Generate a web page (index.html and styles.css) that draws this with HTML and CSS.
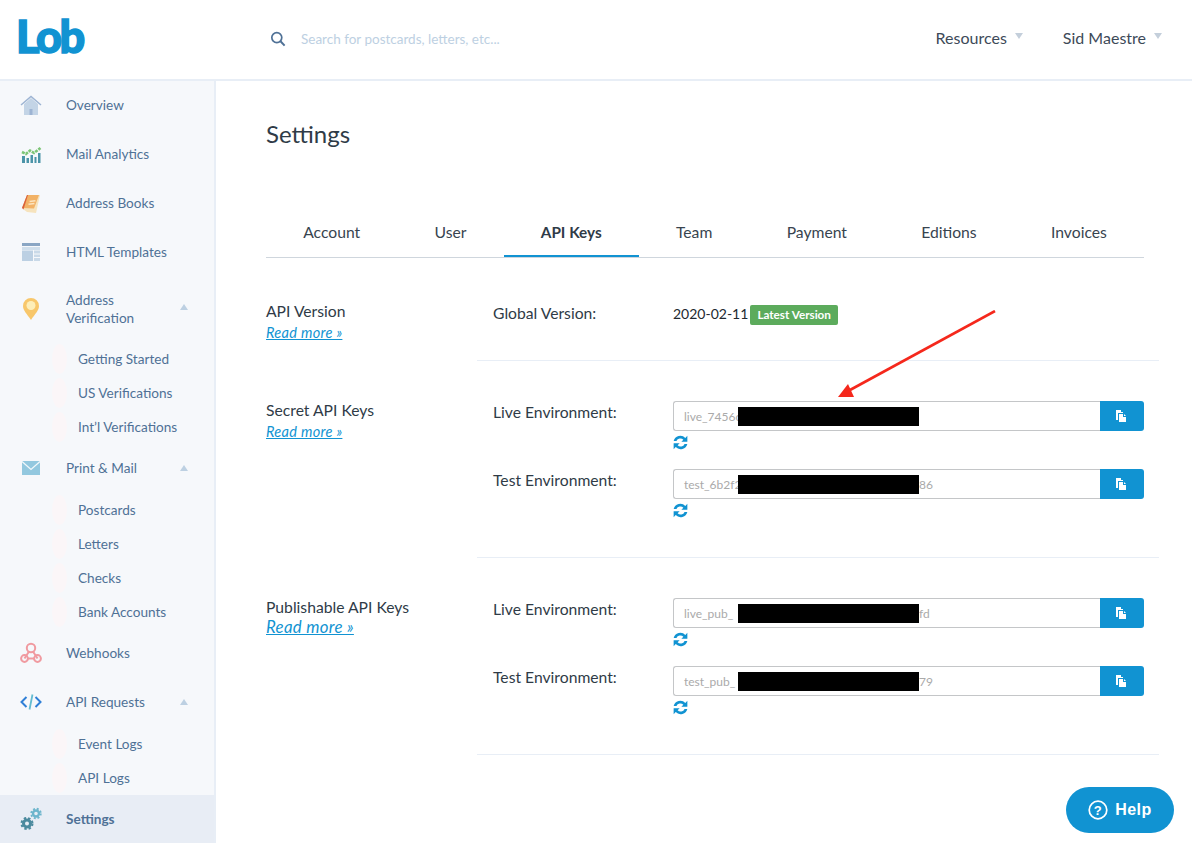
FILE: index.html
```html
<!DOCTYPE html>
<html lang="en">
  <head>
    <meta charset="UTF-8" />
    <meta name="viewport" content="width=device-width, initial-scale=1.0" />
    <title>Settings</title>
    <link rel="stylesheet" href="styles.css">
  </head>
  <body>
    <header class="topbar">
      <div class="logo">Lob</div>
      <div class="search">
        <svg class="search-icon" width="16" height="16" viewBox="0 0 16 16"><circle cx="6.8" cy="6.6" r="5" fill="none" stroke="#4f7196" stroke-width="1.7"/><path d="M10.5 10.3L14.6 14.6" stroke="#4f7196" stroke-width="2"/></svg>
        <span>Search for postcards, letters, etc...</span>
      </div>
      <div class="top-link top-resources">Resources <i class="top-caret"></i></div>
      <div class="top-link">Sid Maestre <i class="top-caret"></i></div>
    </header>

    <div class="layout">
      <nav class="sidebar">
        <a class="nav-item nav-first">
          <svg class="nav-icon" width="22" height="22" viewBox="0 0 22 22"><path d="M4 10L11 4L18 10V21H4Z" fill="#c3d4e6"/><path d="M1 11L11 2.5L21 11" fill="none" stroke="#9db4d3" stroke-width="1.5"/><rect x="9.5" y="15" width="3" height="6" fill="#9db4d3"/></svg>
          <span>Overview</span>
        </a>
        <a class="nav-item">
          <svg class="nav-icon" width="22" height="22" viewBox="0 0 22 22"><path d="M2 13V20H5V13ZM6.500 15V20H9V15ZM10.500 12V20H13V12ZM14.500 14V20H16.500V14ZM18 10V20H20.500V10Z" fill="#4b94a8"/><path d="M2 9L6 11L10 7.500L14 10L20.500 5" fill="none" stroke="#7cc576" stroke-width="2.600" stroke-dasharray="3 1"/></svg>
          <span>Mail Analytics</span>
        </a>
        <a class="nav-item">
          <svg class="nav-icon" width="22" height="22" viewBox="0 0 22 22"><path d="M3 17L7 20L16 21L20 3L8 4Z" fill="#f6e3bd"/><path d="M2 16L7 3H19L14 16.500Z" fill="#f2b266"/><path d="M2 16L7 3H8L3.500 17.500Z" fill="#d9603b"/><rect x="9.500" y="8.500" width="6" height="1.500" fill="#fbe4c0" transform="rotate(-8 12 9)"/><rect x="8.500" y="11" width="6" height="1.500" fill="#fbe4c0" transform="rotate(-8 12 12)"/></svg>
          <span>Address Books</span>
        </a>
        <a class="nav-item">
          <svg class="nav-icon" width="22" height="22" viewBox="0 0 22 22"><rect x="2" y="2" width="18" height="3" fill="#8aa6c4"/><rect x="2" y="6" width="18" height="3" fill="#d0dfec"/><rect x="2" y="9.500" width="11" height="10.500" fill="#bcd0e3"/><path d="M14 9.500H20V12.500H14ZM14 13.500H20V16H14ZM14 17H20V20H14Z" fill="#c9d9e8"/></svg>
          <span>HTML Templates</span>
        </a>
        <a class="nav-item nav-tall">
          <svg class="nav-icon" width="22" height="24" viewBox="0 0 22 24"><path d="M11 23C7 17 3 13.500 3 9A8 8 0 0 1 19 9C19 13.500 15 17 11 23Z" fill="#f8c76b"/><circle cx="11" cy="8.500" r="4.500" fill="#fdeeb9"/></svg>
          <span class="nav-text">Address Verification</span>
          <i class="nav-caret"></i>
        </a>
        <div class="sub-list sub-verify">
          <a class="sub-item">Getting Started</a>
          <a class="sub-item">US Verifications</a>
          <a class="sub-item">Int’l Verifications</a>
        </div>
        <a class="nav-item">
          <svg class="nav-icon" width="22" height="22" viewBox="0 0 22 22"><rect x="2" y="4" width="18" height="14" fill="#93c8df"/><path d="M2 4.500L11 12.500L20 4.500" fill="none" stroke="#f2f8fb" stroke-width="1.300"/></svg>
          <span>Print &amp; Mail</span>
          <i class="nav-caret"></i>
        </a>
        <div class="sub-list">
          <a class="sub-item">Postcards</a>
          <a class="sub-item">Letters</a>
          <a class="sub-item">Checks</a>
          <a class="sub-item">Bank Accounts</a>
        </div>
        <a class="nav-item">
          <svg class="nav-icon" width="22" height="22" viewBox="0 0 22 22"><g fill="none" stroke="#f09aa0" stroke-width="2"><circle cx="11" cy="6" r="4.200"/><circle cx="4.500" cy="16.500" r="3.400"/><circle cx="17.500" cy="16.500" r="3.400"/><path d="M4.500 16.500L9 9.500M13 9.500L17.500 16.500M8 16.500H14"/></g></svg>
          <span>Webhooks</span>
        </a>
        <a class="nav-item">
          <svg class="nav-icon" width="22" height="22" viewBox="0 0 22 22"><path d="M6.500 6L1.500 11L6.500 16M15.500 6L20.500 11L15.500 16" fill="none" stroke="#2f7fd6" stroke-width="2"/><path d="M12.500 3.500L9.500 18.500" stroke="#63bcd0" stroke-width="1.800"/></svg>
          <span>API Requests</span>
          <i class="nav-caret"></i>
        </a>
        <div class="sub-list">
          <a class="sub-item">Event Logs</a>
          <a class="sub-item">API Logs</a>
        </div>
        <a class="nav-item nav-active">
          <svg class="nav-icon" width="22" height="24" viewBox="0 0 22 24"><g fill="none"><circle cx="7" cy="16.500" r="3.500" stroke="#4b8a9e" stroke-width="3"/><circle cx="7" cy="16.500" r="5.500" stroke="#4b8a9e" stroke-width="2" stroke-dasharray="2.400 2"/><circle cx="16" cy="6.500" r="3" stroke="#6db5cc" stroke-width="2.400"/><circle cx="16" cy="6.500" r="4.800" stroke="#6db5cc" stroke-width="1.800" stroke-dasharray="2 1.800"/></g></svg>
          <span class="nav-active-text">Settings</span>
        </a>
      </nav>

      <main class="content">
        <h1 class="page-title">Settings</h1>
        <div class="tabs">
          <a class="tab">Account</a>
          <a class="tab">User</a>
          <a class="tab tab-active">API Keys</a>
          <a class="tab">Team</a>
          <a class="tab">Payment</a>
          <a class="tab">Editions</a>
          <a class="tab">Invoices</a>
        </div>

        <section class="section section-version">
          <div class="section-label">
            <div class="label-title">API Version</div>
            <a class="read-more">Read more »</a>
          </div>
          <div class="section-body">
            <div class="version-row">
              <div class="field-name">Global Version:</div>
              <div class="version-date">2020-02-11</div>
              <span class="badge">Latest Version</span>
            </div>
          </div>
        </section>

        <section class="section">
          <div class="section-label">
            <div class="label-title">Secret API Keys</div>
            <a class="read-more">Read more »</a>
          </div>
          <div class="section-body">
            <div class="key-row">
              <div class="field-name">Live Environment:</div>
              <div class="key-field">
                <div class="key-input-wrap">
                  <div class="key-input">live_7456c<b class="redact"></b></div>
                  <button class="copy-btn"><svg width="12" height="12" viewBox="0 0 12 12"><path d="M1 0H6V2H8V3H3V10H1ZM4 4H8V7H11V12H4ZM9 4L11 6H9Z" fill="#fff"/></svg></button>
                </div>
                <svg class="refresh" width="15" height="15" viewBox="0 0 14 14"><path d="M.6 5.700A6.500 6.500 0 0 1 11.500 2.700L13.400 .8V6.400H7.800L9.700 4.500A3.900 3.900 0 0 0 3.200 5.700ZM13.400 8.300A6.500 6.500 0 0 1 2.500 11.300L.6 13.200V7.600H6.200L4.300 9.500A3.900 3.900 0 0 0 10.800 8.300Z" fill="#1193d2"/></svg>
              </div>
            </div>
            <div class="key-row">
              <div class="field-name">Test Environment:</div>
              <div class="key-field">
                <div class="key-input-wrap">
                  <div class="key-input">test_6b2f2<b class="redact"></b><span class="key-tail">86</span></div>
                  <button class="copy-btn"><svg width="12" height="12" viewBox="0 0 12 12"><path d="M1 0H6V2H8V3H3V10H1ZM4 4H8V7H11V12H4ZM9 4L11 6H9Z" fill="#fff"/></svg></button>
                </div>
                <svg class="refresh" width="15" height="15" viewBox="0 0 14 14"><path d="M.6 5.700A6.500 6.500 0 0 1 11.500 2.700L13.400 .8V6.400H7.800L9.700 4.500A3.900 3.900 0 0 0 3.200 5.700ZM13.400 8.300A6.500 6.500 0 0 1 2.500 11.300L.6 13.200V7.600H6.200L4.300 9.500A3.900 3.900 0 0 0 10.800 8.300Z" fill="#1193d2"/></svg>
              </div>
            </div>
          </div>
        </section>

        <section class="section">
          <div class="section-label">
            <div class="label-title">Publishable API Keys</div>
            <a class="read-more read-more-big">Read more »</a>
          </div>
          <div class="section-body">
            <div class="key-row">
              <div class="field-name">Live Environment:</div>
              <div class="key-field">
                <div class="key-input-wrap">
                  <div class="key-input">live_pub_<b class="redact"></b><span class="key-tail">fd</span></div>
                  <button class="copy-btn"><svg width="12" height="12" viewBox="0 0 12 12"><path d="M1 0H6V2H8V3H3V10H1ZM4 4H8V7H11V12H4ZM9 4L11 6H9Z" fill="#fff"/></svg></button>
                </div>
                <svg class="refresh" width="15" height="15" viewBox="0 0 14 14"><path d="M.6 5.700A6.500 6.500 0 0 1 11.500 2.700L13.400 .8V6.400H7.800L9.700 4.500A3.900 3.900 0 0 0 3.200 5.700ZM13.400 8.300A6.500 6.500 0 0 1 2.500 11.300L.6 13.200V7.600H6.200L4.300 9.500A3.900 3.900 0 0 0 10.800 8.300Z" fill="#1193d2"/></svg>
              </div>
            </div>
            <div class="key-row">
              <div class="field-name">Test Environment:</div>
              <div class="key-field">
                <div class="key-input-wrap">
                  <div class="key-input">test_pub_<b class="redact"></b><span class="key-tail">79</span></div>
                  <button class="copy-btn"><svg width="12" height="12" viewBox="0 0 12 12"><path d="M1 0H6V2H8V3H3V10H1ZM4 4H8V7H11V12H4ZM9 4L11 6H9Z" fill="#fff"/></svg></button>
                </div>
                <svg class="refresh" width="15" height="15" viewBox="0 0 14 14"><path d="M.6 5.700A6.500 6.500 0 0 1 11.500 2.700L13.400 .8V6.400H7.800L9.700 4.500A3.900 3.900 0 0 0 3.200 5.700ZM13.400 8.300A6.500 6.500 0 0 1 2.500 11.300L.6 13.200V7.600H6.200L4.300 9.500A3.900 3.900 0 0 0 10.800 8.300Z" fill="#1193d2"/></svg>
              </div>
            </div>
          </div>
        </section>
      </main>
    </div>

    <!-- red arrow drawn over the screenshot -->
    <svg class="arrow" width="170" height="100" viewBox="0 0 170 100"><path d="M159 1L14 80" stroke="#f5281c" stroke-width="2.600"/><path d="M2 87L12 74L18 87Z" fill="#f5281c"/></svg>

    <button class="help">
      <svg width="20" height="20" viewBox="0 0 20 20"><circle cx="10" cy="10" r="8.800" fill="none" stroke="#fff" stroke-width="1.700"/><text x="10" y="14.500" text-anchor="middle" class="help-q">?</text></svg>
      Help
    </button>
  </body>
</html>
```

FILE: styles.css
```css
* {
  box-sizing: border-box;
}
html,
body {
  height: 100%;
}
body {
  margin: 0;
  overflow: hidden;
  background-color: #fff;
  color: #2f3b47;
  font-family: "Lato", "Liberation Sans", sans-serif;
  font-size: 15.700px;
}

/* top bar */
.topbar {
  display: flex;
  align-items: center;
  height: 81px;
  border-bottom: 2px solid #e8eef6;
  padding: 0 30px 3px 16px;
}
.logo {
  width: 254px;
  margin-top: -4px;
  color: #1193d2;
  font-size: 45px;
  font-weight: 900;
  line-height: 1;
  letter-spacing: -2.500px;
  -webkit-text-stroke: 1.500px #1193d2;
}
.search {
  display: flex;
  align-items: center;
  flex: 1;
  gap: 15px;
  margin-top: 1px;
  color: #bdd0e2;
  font-size: 13.500px;
}
.top-link {
  display: flex;
  align-items: center;
  gap: 8px;
  margin-top: -2px;
  color: #3d4a58;
  font-size: 16px;
}
.top-resources {
  margin-right: 40px;
}
.top-caret {
  width: 0;
  height: 0;
  margin-top: -3px;
  border-left: 4px solid transparent;
  border-right: 4px solid transparent;
  border-top: 6px solid #c4cfdb;
}

.layout {
  display: flex;
  height: 762px;
}

/* sidebar */
.sidebar {
  display: flex;
  flex-direction: column;
  flex: none;
  width: 216px;
  background-color: #f6f8fb;
  border-right: 2px solid #e8eef6;
  color: #4f7196;
  font-size: 13.600px;
}
.nav-item {
  display: flex;
  align-items: center;
  flex: none;
  height: 49px;
  padding-left: 20px;
}
.nav-first {
  height: 48px;
}
.nav-icon {
  flex: none;
  margin-right: 24px;
}
.nav-tall {
  height: 48px;
  margin-top: 9px;
  line-height: 18px;
}
.nav-text {
  width: 90px;
}
.nav-caret {
  width: 0;
  height: 0;
  margin-left: auto;
  margin-right: 26px;
  border-left: 4px solid transparent;
  border-right: 4px solid transparent;
  border-bottom: 6px solid #bdd0e2;
}
.nav-tall .nav-caret {
  margin-top: -5px;
}
.sub-list {
  display: flex;
  flex-direction: column;
  flex: none;
  margin-bottom: -1px;
  padding-top: 1px;
}
.sub-verify {
  padding-top: 9px;
}
.sub-item {
  position: relative;
  display: flex;
  align-items: center;
  height: 34px;
  padding-left: 78px;
}
.sub-item::before {
  content: "";
  position: absolute;
  left: 52px;
  top: 2px;
  width: 15px;
  height: 30px;
  border-radius: 50%;
  background-color: #fbf6f8;
}
.nav-active {
  height: 48px;
  margin-top: 1px;
  background-color: #e8edf5;
}
.nav-active-text {
  font-weight: 700;
}

/* main column */
.content {
  flex: 1;
  padding-left: 50px;
}
.page-title {
  margin: 38px 0 0;
  color: #2f3b47;
  font-size: 24px;
  font-weight: 400;
  line-height: 30px;
}
.tabs {
  display: flex;
  width: 878px;
  margin-top: 62px;
  border-bottom: 1px solid #cfd6dd;
}
.tab {
  flex: 1 1 auto;
  height: 46px;
  text-align: center;
  line-height: 42px;
  color: #38444f;
}
.tab-active {
  border-bottom: 2px solid #1193d2;
  margin-bottom: -1px;
  color: #2f3b47;
  font-size: 15.300px;
  font-weight: 700;
}

.section {
  display: grid;
  grid-template-columns: 211px 682px;
  padding-bottom: 20px;
}
.section-version {
  padding-bottom: 0;
}
.section-label {
  padding-top: 40px;
}
.section-version .section-label {
  padding-top: 44px;
}
.label-title {
  line-height: 18px;
}
.read-more {
  display: block;
  margin-top: 5px;
  color: #1193d2;
  font-size: 14.500px;
  font-style: italic;
  line-height: 16px;
  letter-spacing: 0.300px;
  text-decoration: underline;
}
.read-more-big {
  margin-top: 3px;
  font-size: 16.800px;
}
.section-body {
  margin-bottom: -20px;
  padding: 40px 15px 20px 16px;
  border-bottom: 1px solid #e8eef6;
}
.section-version .section-body {
  margin-bottom: 0;
  height: 103px;
  padding-top: 45px;
}
.field-name {
  flex: none;
  width: 180px;
}
.version-row {
  display: flex;
  align-items: center;
  height: 20px;
}
.version-date {
  margin-right: 2px;
  color: #22292f;
  font-size: 14px;
}
.badge {
  display: block;
  height: 20px;
  margin-top: 3px;
  padding: 0 7px;
  border-radius: 2px;
  background-color: #5cab5c;
  color: #fff;
  font-size: 11.700px;
  font-weight: 700;
  line-height: 19px;
}
.key-row {
  display: flex;
  height: 68px;
}
.key-row .field-name {
  padding-top: 2px;
}
.key-field {
  flex: 1;
}
.key-input-wrap {
  display: flex;
  height: 30px;
}
.key-input {
  position: relative;
  flex: 1;
  padding-left: 10px;
  border: 1px solid #c4c6c8;
  border-right: none;
  border-radius: 3px 0 0 3px;
  color: #aaa;
  font-size: 12px;
  line-height: 29px;
  white-space: nowrap;
}
.redact {
  position: absolute;
  left: 64px;
  top: 5px;
  width: 181px;
  height: 19px;
  background-color: #000;
}
.key-tail {
  position: absolute;
  left: 245px;
}
.copy-btn {
  display: flex;
  align-items: center;
  justify-content: center;
  flex: none;
  width: 44px;
  border: none;
  border-radius: 0 3px 3px 0;
  background-color: #1193d2;
  padding: 0 2px 0 0;
}
.refresh {
  display: block;
  margin-top: 4px;
}

/* overlays */
.arrow {
  position: absolute;
  left: 836px;
  top: 310px;
}
.help {
  position: fixed;
  right: 18px;
  bottom: 10px;
  display: flex;
  align-items: center;
  justify-content: center;
  gap: 7px;
  width: 108px;
  height: 46px;
  border: none;
  border-radius: 23px;
  background-color: #1193d2;
  color: #fff;
  font-family: "Liberation Sans", sans-serif;
  font-size: 16px;
  font-weight: 700;
  letter-spacing: 0.500px;
}
.help-q {
  fill: #fff;
  font-size: 13px;
  font-weight: 700;
}
```
